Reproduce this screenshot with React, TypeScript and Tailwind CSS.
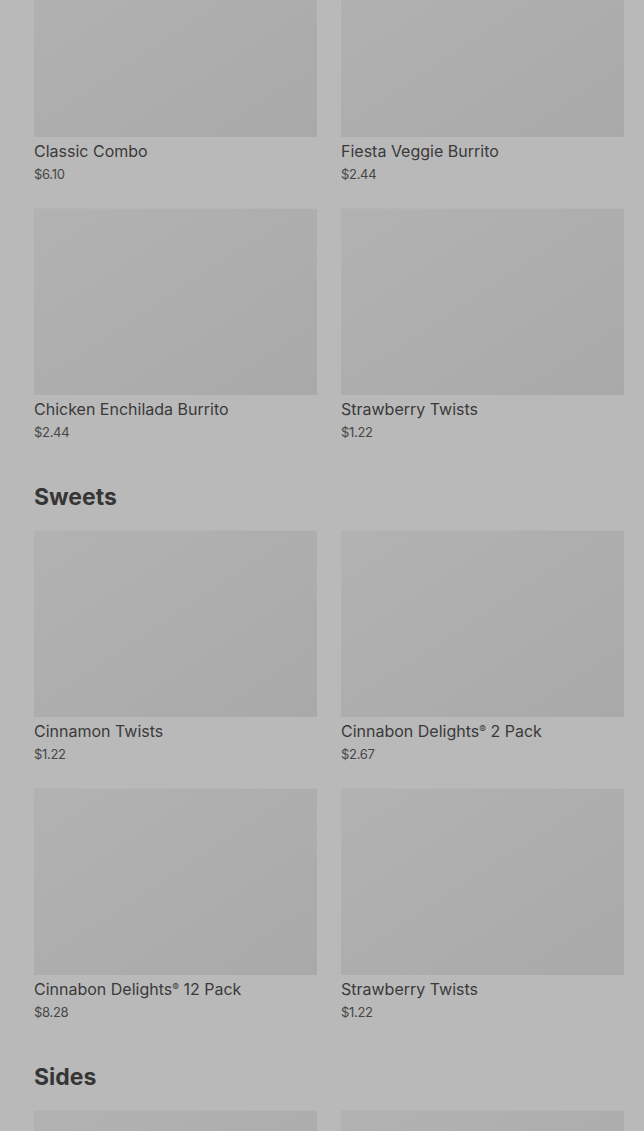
import React from "react";

type Item = { name: string; price: string };

const sections: { title?: string; items: Item[]; imageOnly?: boolean }[] = [
  {
    items: [
      { name: "Classic Combo", price: "$6.10" },
      { name: "Fiesta Veggie Burrito", price: "$2.44" },
      { name: "Chicken Enchilada Burrito", price: "$2.44" },
      { name: "Strawberry Twists", price: "$1.22" },
    ],
  },
  {
    title: "Sweets",
    items: [
      { name: "Cinnamon Twists", price: "$1.22" },
      { name: "Cinnabon Delights® 2 Pack", price: "$2.67" },
      { name: "Cinnabon Delights® 12 Pack", price: "$8.28" },
      { name: "Strawberry Twists", price: "$1.22" },
    ],
  },
  {
    title: "Sides",
    imageOnly: true,
    items: [
      { name: "", price: "" },
      { name: "", price: "" },
    ],
  },
];

function Name({ text }: { text: string }) {
  const parts = text.split("®");
  return (
    <>
      {parts.map((p, i) => (
        <React.Fragment key={i}>
          {p}
          {i < parts.length - 1 && (
            <span className="text-[10px] align-[4px] leading-none">®</span>
          )}
        </React.Fragment>
      ))}
    </>
  );
}

function Card({ item, imageOnly }: { item: Item; imageOnly?: boolean }) {
  return (
    <div className="flex flex-col">
      <div className="h-[187px] w-full bg-gradient-to-br from-[#b2b2b2] to-[#a9a9a9] border-t border-[#b5b5b5]" />
      {!imageOnly && (
        <>
          <div className="mt-[4px] text-[16px] leading-[20px] text-[#3a3a3a]">
            <Name text={item.name} />
          </div>
          <div className="mt-[4px] text-[13px] leading-[18px] text-[#474747] tracking-[-0.3px]">
            {item.price}
          </div>
        </>
      )}
    </div>
  );
}

export default function App() {
  return (
    <div
      className="h-[1131px] overflow-hidden bg-[#b9b9b9] pl-[34px] pr-[20px]"
      style={{ fontFamily: "Inter, 'Noto Sans', Arial, sans-serif" }}
    >
      <div className="-mt-[50px] flex flex-col">
        {sections.map((s, i) => (
          <div key={i} className={i === 0 ? "" : "mt-[42px]"}>
            {s.title && (
              <h2 className="text-[23px] leading-[28px] font-bold text-[#363636] mb-[19px]">
                {s.title}
              </h2>
            )}
            <div className="grid grid-cols-2 gap-x-[24px] gap-y-[25px]">
              {s.items.map((it, j) => (
                <Card key={j} item={it} imageOnly={s.imageOnly} />
              ))}
            </div>
          </div>
        ))}
      </div>
    </div>
  );
}
